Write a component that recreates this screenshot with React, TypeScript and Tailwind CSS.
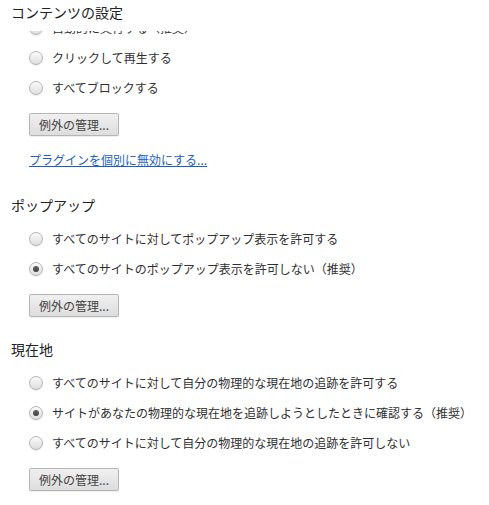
import React from "react";

const font = { fontFamily: '"Noto Sans CJK JP", "Noto Sans", sans-serif' };

// ── Radio ─────────────────────────────────────────────────────────
function Radio({ label, checked = false }: { label: string; checked?: boolean }) {
  return (
    <div className="flex h-[30px] items-center">
      <span className="flex h-[14px] w-[14px] shrink-0 items-center justify-center rounded-full border border-[#b4b4b4] bg-gradient-to-b from-[#fbfbfb] to-[#dedede] shadow-[0_1px_1px_rgba(0,0,0,0.08)]">
        {checked && <span className="h-[6px] w-[6px] rounded-full bg-gradient-to-b from-[#666] to-[#3e3e3e]" />}
      </span>
      <span className="ml-[9px] text-[12px] leading-[16px] text-[#303030]">{label}</span>
    </div>
  );
}

// ── Button ────────────────────────────────────────────────────────
function ExceptionButton() {
  return (
    <button className="mt-[10px] flex h-[23px] w-[90px] items-center justify-center rounded-[2px] border border-[#b6b6b6] bg-gradient-to-b from-[#f0f0f0] to-[#dddddd] text-[12px] leading-none text-[#444] shadow-[0_1px_0_rgba(0,0,0,0.06)]">
      例外の管理...
    </button>
  );
}

// ── Section ───────────────────────────────────────────────────────
function Section({ title, options, className }: { title: string; options: { label: string; checked?: boolean }[]; className?: string }) {
  return (
    <section className={className}>
      <h3 className="h-[20px] text-[14px] leading-[20px] text-[#222]">{title}</h3>
      <div className="mt-[9px] pl-[18px]">
        {options.map((o) => (
          <Radio key={o.label} label={o.label} checked={o.checked} />
        ))}
        <ExceptionButton />
      </div>
    </section>
  );
}

export default function App() {
  return (
    <div className="relative h-[505px] w-[489px] overflow-hidden bg-white" style={font}>
      {/* fixed header over the scrolled list */}
      <div className="absolute left-0 right-0 top-0 z-10 h-[31px] bg-white pl-[11px] pt-[2px]">
        <h2 className="text-[14px] leading-[20px] text-[#222]">コンテンツの設定</h2>
      </div>

      <div className="pl-[11px] pt-[13px]">
        {/* plugins (scrolled) */}
        <div className="pl-[18px]">
          <Radio label="自動的に実行する（推奨）" checked />
          <Radio label="クリックして再生する" />
          <Radio label="すべてブロックする" />
          <ExceptionButton />
          <a href="#" className="mt-[16px] block text-[12px] leading-[16px] text-[#1a5fc8] underline">
            プラグインを個別に無効にする...
          </a>
        </div>

        <Section
          className="mt-[27px]"
          title="ポップアップ"
          options={[
            { label: "すべてのサイトに対してポップアップ表示を許可する" },
            { label: "すべてのサイトのポップアップ表示を許可しない（推奨）", checked: true },
          ]}
        />

        <Section
          className="mt-[22px]"
          title="現在地"
          options={[
            { label: "すべてのサイトに対して自分の物理的な現在地の追跡を許可する" },
            { label: "サイトがあなたの物理的な現在地を追跡しようとしたときに確認する（推奨）", checked: true },
            { label: "すべてのサイトに対して自分の物理的な現在地の追跡を許可しない" },
          ]}
        />
      </div>
    </div>
  );
}
